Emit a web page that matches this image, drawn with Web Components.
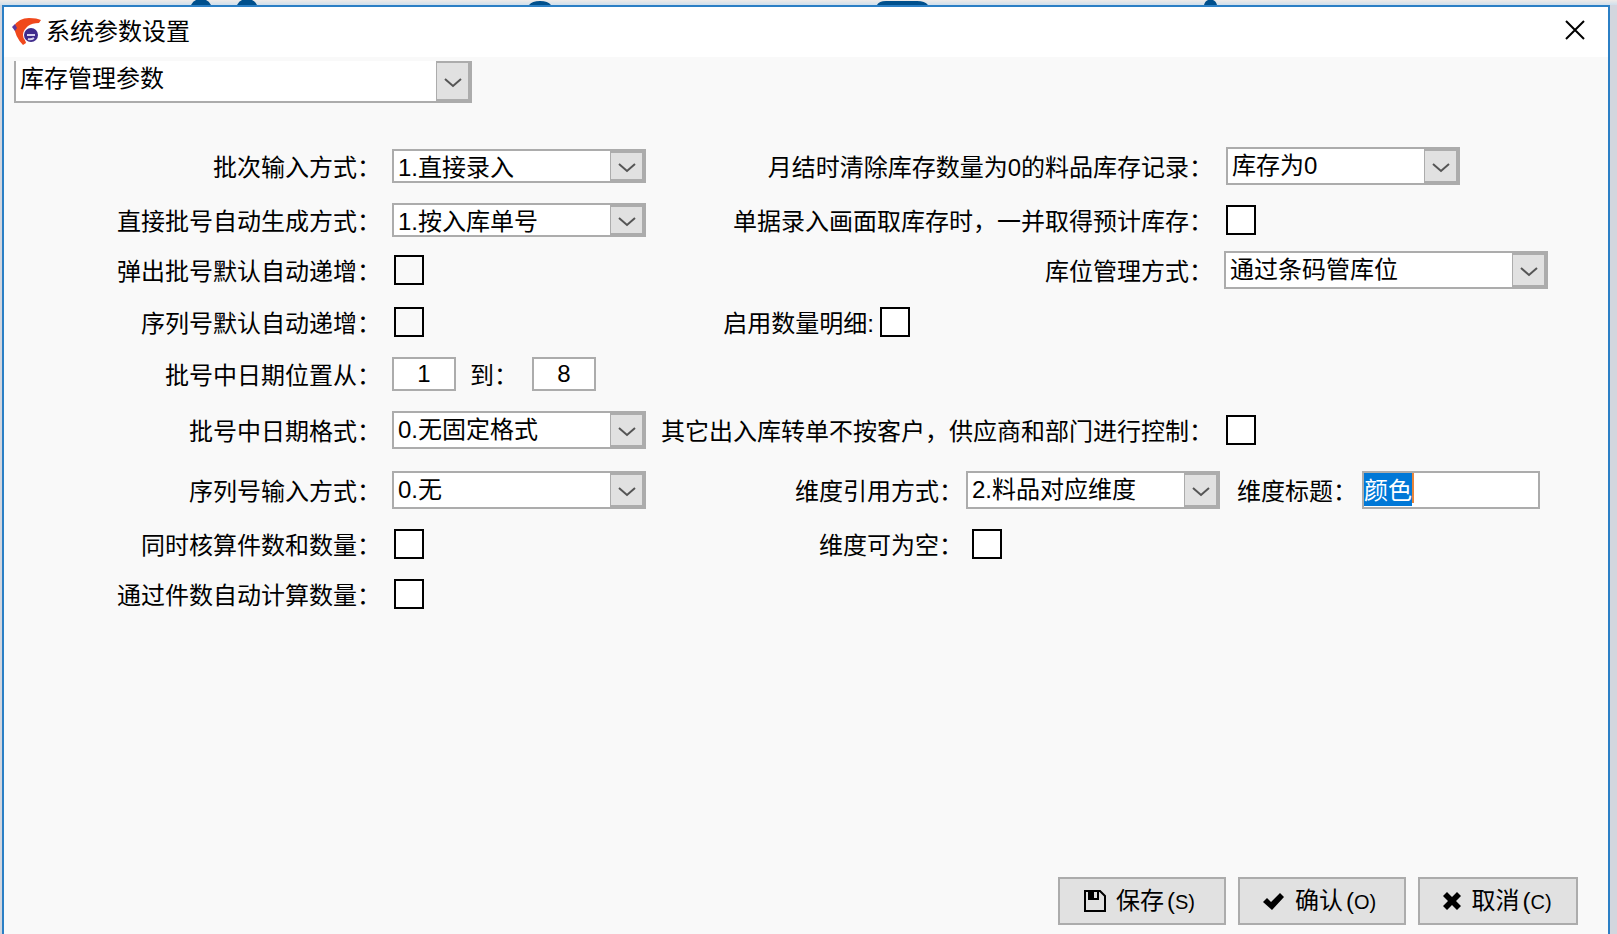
<!DOCTYPE html>
<html lang="zh-CN">
<head>
<meta charset="utf-8">
<title>系统参数设置</title>
<style>
  body {
    margin: 0;
    color: #000;
    background: #d3d6de;
    font: 24px/30px "Liberation Sans", "Noto Sans CJK SC", sans-serif;
  }
</style>
</head>
<body>
<settings-window></settings-window>

<template id="settings-window">
  <style>
    :host { display: flex; flex-direction: column; min-height: 100vh; overflow: hidden; }
    .backdrop { height: 5px; background: linear-gradient(#efebe8, #cfdfec); }
    .backdrop svg { display: block; }
    .dialog {
      flex: 1; display: flex; flex-direction: column; margin: 0 7px 0 2px;
      border: 2px solid #2b7fc5; border-bottom: 0; background: #f9f9f9;
    }
    .page { padding: 4px 10px 0; }
    param-form { margin-top: 36px; }
    footer { display: flex; justify-content: flex-end; gap: 12px; margin-top: auto; padding: 20px 30px 9px; }
  </style>
  <div class="backdrop">
    <svg width="1300" height="5" fill="#00508d" aria-hidden="true">
      <path d="M191 5q2-4 5-5h10q3 1 5 5zM237 5q2-4 5-5h10q3 1 5 5zM529 5q3-4 11-4t11 4zM877 5q2-4 9-4h31q8 0 11 4zM1204 5q1-4 4-5h5q3 1 4 5z"/>
    </svg>
  </div>
  <main class="dialog">
    <title-bar>系统参数设置</title-bar>
    <div class="page">
      <param-field kind="select" area="page" caption="参数分类" value="库存管理参数"></param-field>
    </div>
    <param-form></param-form>
    <footer>
      <action-button icon="save" key="S">保存</action-button>
      <action-button icon="check" key="O">确认</action-button>
      <action-button icon="cross" key="C" class="narrow">取消</action-button>
    </footer>
  </main>
</template>

<template id="title-bar">
  <style>
    :host { display: flex; align-items: center; height: 50px; padding: 0 23px 0 8px; background: #fff; }
    h1 { flex: 1; margin: 0 0 0 5px; font: inherit; }
    svg { display: block; }
    button { padding: 0 0 4px; border: 0; background: none; }
  </style>
  <svg width="29" height="30" viewBox="0 0 29 30" aria-hidden="true">
    <path fill="#f0481c" d="M2 9Q7 1 17 1q8 0 12 2l-2 3q-7 0-11 3-5 4-4 10l2 7-3 2Q3 20 2 9z"/>
    <path fill="#5a3a9c" d="M0 10l3-3 2 4-2 3z"/>
    <circle cx="19" cy="18" r="8" fill="#fff"/>
    <circle cx="19" cy="18" r="7" fill="#3f2b8c"/>
    <path fill="none" stroke="#d8d2ee" stroke-width="2" d="M15 18h8M16 22q3 1 6-1"/>
  </svg>
  <h1><slot></slot></h1>
  <button type="button" aria-label="关闭">
    <svg width="20" height="20" viewBox="0 0 20 20" fill="none" stroke="#000" stroke-width="2"><path d="M1 1l18 18M19 1L1 19"/></svg>
  </button>
</template>

<template id="param-form">
  <style>
    :host {
      display: grid;
      grid-template-columns: minmax(0, 388fr) minmax(0, 268fr) minmax(0, 306fr) minmax(0, 258fr) minmax(0, 384fr);
      grid-template-rows: 54px 54px 46px 58px 46px 66px 54px 54px 46px;
    }
    .r1 { grid-row: 1 } .r2 { grid-row: 2 } .r3 { grid-row: 3 }
    .r4 { grid-row: 4 } .r5 { grid-row: 5 } .r6 { grid-row: 6 }
    .r7 { grid-row: 7 } .r8 { grid-row: 8 } .r9 { grid-row: 9 }
  </style>
  <param-field class="r1" area="left" kind="select" size="short" caption="批次输入方式：" value="1.直接录入"></param-field>
  <param-field class="r2" area="left" kind="select" size="short" caption="直接批号自动生成方式：" value="1.按入库单号"></param-field>
  <param-field class="r3" area="left" kind="check" clear caption="弹出批号默认自动递增："></param-field>
  <param-field class="r4" area="left" kind="check" clear caption="序列号默认自动递增："></param-field>
  <param-field class="r5" area="left" kind="number" caption="批号中日期位置从：" value="1">
    <param-field area="inline" kind="number" caption="到：" value="8"></param-field>
  </param-field>
  <param-field class="r6" area="left" kind="select" caption="批号中日期格式：" value="0.无固定格式"></param-field>
  <param-field class="r7" area="left" kind="select" caption="序列号输入方式：" value="0.无"></param-field>
  <param-field class="r8" area="left" kind="check" caption="同时核算件数和数量："></param-field>
  <param-field class="r9" area="left" kind="check" caption="通过件数自动计算数量："></param-field>

  <param-field class="r1" area="wide" kind="select" size="small" caption="月结时清除库存数量为0的料品库存记录：" value="库存为0"></param-field>
  <param-field class="r2" area="wide" kind="check" caption="单据录入画面取库存时，一并取得预计库存："></param-field>
  <param-field class="r3" area="wide" kind="select" size="large" caption="库位管理方式：" value="通过条码管库位"></param-field>
  <param-field class="r4" area="detail" kind="check" caption="启用数量明细:"></param-field>
  <param-field class="r6" area="wide" kind="check" caption="其它出入库转单不按客户，供应商和部门进行控制："></param-field>
  <param-field class="r7" area="mid" kind="select" caption="维度引用方式：" value="2.料品对应维度">
    <param-field area="title" kind="text" caption="维度标题：" value="颜色" selected></param-field>
  </param-field>
  <param-field class="r8" area="mid" kind="check" caption="维度可为空："></param-field>
</template>

<template id="param-field">
  <style>
    :host { display: grid; grid-template-columns: subgrid; align-items: center; white-space: nowrap; }
    :host([area="left"]) { grid-column: 1 / 3; }
    :host([area="wide"]), :host([area="mid"]) { grid-column: 3 / 6; }
    :host([area="detail"]) { grid-column: 3; display: flex; justify-content: flex-end; padding-right: 56px; }
    :host([area="inline"]) { display: flex; gap: 14px; margin-left: 14px; }
    :host([area="title"]) { display: flex; gap: 5px; margin-left: 17px; }
    :host([area="page"]) { display: flex; }

    label { justify-self: end; padding: 3px 11px 0 0; }
    :host([area="wide"]) label { grid-column: span 2; }
    :host([area="mid"]) label { padding-right: 3px; }
    :host([area="detail"]) label { padding-right: 4px; }
    :host([area="inline"]) label, :host([area="title"]) label { padding-right: 0; }
    .control { display: flex; align-items: center; }
    :host([area="mid"]) .control { grid-column: 2 / 4; }

    .combo {
      display: grid; grid-template-columns: minmax(0, 1fr) 34px; box-sizing: border-box;
      width: 254px; height: 38px; border: 2px solid #acacac; background: #fff;
    }
    :host([size="short"]) .combo { height: 34px; }
    :host([size="small"]) .combo { width: 234px; margin-left: 2px; }
    :host([size="large"]) .combo { width: 324px; }
    :host([area="page"]) .combo { width: 458px; height: 42px; border-top: 0; }
    select {
      grid-area: 1 / 1 / 2 / 3; appearance: none; box-sizing: border-box; width: 100%; height: 32px;
      margin: 0; padding: 2px 36px 0 4px;
      border: 0; border-radius: 0; outline: 0; color: #000; background: none; font: inherit;
    }
    :host([size="short"]) select { height: 30px; }
    :host([area="page"]) select { padding-top: 3px; }
    .arrow {
      grid-area: 1 / 2; display: flex; align-items: center; justify-content: center;
      padding-top: 3px; border: 2px solid #acacac; border-width: 2px 2px 2px 1px; background: #e1e1e1; pointer-events: none;
    }
    input { box-sizing: border-box; margin: 0; border: 2px solid #acacac; border-radius: 0; outline: 0; color: #000; background: #fff; font: inherit; }
    input[type="checkbox"] { appearance: none; width: 30px; height: 30px; margin-left: 2px; border-color: #000; }
    :host([clear]) input { background: none; }
    :host([area="mid"]) input[type="checkbox"] { margin-left: 6px; }
    input[inputmode] { width: 64px; height: 34px; padding: 0; text-align: center; }
    input.text {
      width: 178px; height: 38px; padding: 0 0 4px;
      background: linear-gradient(#e8853c, #e8853c) 48px 0 / 2px 30px no-repeat #fff;
    }
    input::selection { color: #fff; background: #0078d7; }
  </style>
  <label for="control"></label>
  <div class="control"><slot></slot></div>
</template>

<template id="action-button">
  <style>
    :host { display: block; }
    button {
      display: flex; align-items: center; justify-content: center; box-sizing: border-box;
      width: 168px; height: 48px; padding: 0 6px 0 0; border: 2px solid #acacac; border-radius: 0;
      color: #000; background: #e1e1e1; font: inherit;
    }
    :host(.narrow) button { width: 160px; padding-right: 2px; }
    .icon { display: flex; margin-right: 9px; }
    .paren { padding-left: 3px; }
    small { font-size: 20px; }
  </style>
  <button type="button"><span class="icon"></span><span><slot></slot><span class="paren">(</span><small></small></span></button>
</template>

<script>
  class TemplateElement extends HTMLElement {
    constructor() {
      super();
      const template = document.getElementById(this.localName);
      this.attachShadow({ mode: 'open' }).append(template.content.cloneNode(true));
    }
  }

  const ICONS = {
    save: '<svg width="24" height="24" viewBox="0 0 24 24"><path d="M2 2h15l5 5v15H2z" fill="none" stroke="#000" stroke-width="2"/><path d="M5 2h11v9H5z"/><path d="M11 3h3v6h-3z" fill="#e1e1e1"/></svg>',
    check: '<svg width="24" height="24" viewBox="0 0 24 24"><path d="M1 13l4-4 4 4 9-9 4 4-12 13z"/></svg>',
    cross: '<svg width="20" height="24" viewBox="0 0 20 24"><path d="M1 7l4-4 5 5 5-5 4 4-5 5 5 5-4 4-5-5-5 5-4-4 5-5z"/></svg>'
  };

  class ParamField extends TemplateElement {
    connectedCallback() {
      if (this.ready) return;
      this.ready = true;
      const root = this.shadowRoot;
      const label = root.querySelector('label');
      const holder = root.querySelector('.control');
      const kind = this.getAttribute('kind');
      const caption = this.getAttribute('caption');
      const value = this.getAttribute('value') || '';
      const control = document.createElement(kind === 'select' ? 'select' : 'input');
      control.id = 'control';
      let box = control;

      if (kind === 'select') {
        control.add(new Option(value));
        box = document.createElement('div');
        box.className = 'combo';
        box.innerHTML = '<span class="arrow"><svg width="18" height="10" viewBox="0 0 18 10" fill="none" stroke="#555" stroke-width="2"><path d="M1 1l8 7 8-7"/></svg></span>';
        box.append(control);
      } else if (kind === 'check') {
        control.type = 'checkbox';
      } else {
        control.type = 'text';
        control.value = value;
        if (kind === 'number') control.inputMode = 'numeric';
        else control.className = 'text';
      }
      holder.prepend(box);

      if (this.getAttribute('area') === 'page') {
        label.remove();
        control.setAttribute('aria-label', caption);
      } else {
        label.textContent = caption;
      }
      if (this.hasAttribute('selected')) {
        control.focus({ preventScroll: true });
        control.select();
      }
    }
  }

  class ActionButton extends TemplateElement {
    connectedCallback() {
      this.shadowRoot.querySelector('.icon').innerHTML = ICONS[this.getAttribute('icon')];
      this.shadowRoot.querySelector('small').textContent = this.getAttribute('key') + ')';
    }
  }

  customElements.define('param-field', ParamField);
  customElements.define('action-button', ActionButton);
  customElements.define('title-bar', class extends TemplateElement {});
  customElements.define('param-form', class extends TemplateElement {});
  customElements.define('settings-window', class extends TemplateElement {});
</script>
</body>
</html>
